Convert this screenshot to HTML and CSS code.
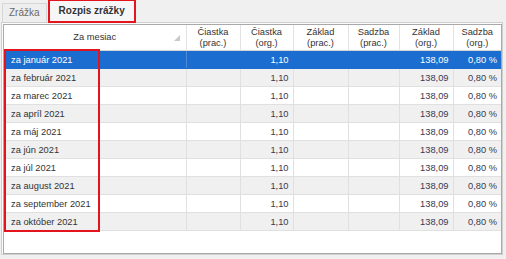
FILE: index.html
```html
<!DOCTYPE html>
<html lang="sk">
  <head>
    <meta charset="UTF-8" />
    <title>Rozpis zrážky</title>
    <link rel="stylesheet" href="styles.css">
  </head>
  <body>
    <div class="tabs">
      <div class="tab">Zrážka</div>
      <div class="tab tab--active">Rozpis zrážky</div>
    </div>
    <div class="panel">
      <div class="grid-wrapper">
        <table class="grid">
          <colgroup>
            <col class="col-month">
            <col class="col-a">
            <col class="col-b">
            <col class="col-c">
            <col class="col-d">
            <col class="col-e">
            <col class="col-f">
          </colgroup>
          <thead>
            <tr>
              <th class="grid__head grid__head--sort">Za mesiac<span class="sort-mark"></span></th>
              <th class="grid__head">Čiastka<br>(prac.)</th>
              <th class="grid__head">Čiastka<br>(org.)</th>
              <th class="grid__head">Základ<br>(prac.)</th>
              <th class="grid__head">Sadzba<br>(prac.)</th>
              <th class="grid__head">Základ<br>(org.)</th>
              <th class="grid__head">Sadzba<br>(org.)</th>
            </tr>
          </thead>
          <tbody>
            <tr class="row row--selected"><td>za január 2021</td><td></td><td class="num">1,10</td><td></td><td></td><td class="num">138,09</td><td class="num">0,80 %</td></tr>
            <tr class="row"><td>za február 2021</td><td></td><td class="num">1,10</td><td></td><td></td><td class="num">138,09</td><td class="num">0,80 %</td></tr>
            <tr class="row"><td>za marec 2021</td><td></td><td class="num">1,10</td><td></td><td></td><td class="num">138,09</td><td class="num">0,80 %</td></tr>
            <tr class="row"><td>za apríl 2021</td><td></td><td class="num">1,10</td><td></td><td></td><td class="num">138,09</td><td class="num">0,80 %</td></tr>
            <tr class="row"><td>za máj 2021</td><td></td><td class="num">1,10</td><td></td><td></td><td class="num">138,09</td><td class="num">0,80 %</td></tr>
            <tr class="row"><td>za jún 2021</td><td></td><td class="num">1,10</td><td></td><td></td><td class="num">138,09</td><td class="num">0,80 %</td></tr>
            <tr class="row"><td>za júl 2021</td><td></td><td class="num">1,10</td><td></td><td></td><td class="num">138,09</td><td class="num">0,80 %</td></tr>
            <tr class="row"><td>za august 2021</td><td></td><td class="num">1,10</td><td></td><td></td><td class="num">138,09</td><td class="num">0,80 %</td></tr>
            <tr class="row"><td>za september 2021</td><td></td><td class="num">1,10</td><td></td><td></td><td class="num">138,09</td><td class="num">0,80 %</td></tr>
            <tr class="row"><td>za október 2021</td><td></td><td class="num">1,10</td><td></td><td></td><td class="num">138,09</td><td class="num">0,80 %</td></tr>
          </tbody>
        </table>
        <div class="highlight-box"></div>
      </div>
    </div>
  </body>
</html>
```

FILE: styles.css
```css
html {
  background-color: #f0f0f0;
}
body {
  margin: 0;
  font-family: "Liberation Sans", Arial, sans-serif;
  font-size: 9.3px;
  color: #333;
}
.tabs {
  display: flex;
  align-items: flex-end;
  height: 22px;
  padding-left: 2px;
}
.tab {
  box-sizing: border-box;
  height: 19px;
  line-height: 18px;
  padding: 0 6px;
  border: 1px solid #d6d6d6;
  border-bottom: none;
  background-color: #eeeeee;
  color: #6a6a6a;
  font-size: 10px;
}
.tab--active {
  height: 22px;
  line-height: 20px;
  margin-left: 2px;
  padding: 0 9px;
  background-color: #f6f6f6;
  color: #333;
  font-weight: bold;
  outline: 2px solid #e3141e;
  outline-offset: -1px;
}
.panel {
  box-sizing: border-box;
  height: 233px;
  margin: 0 3px 0 1px;
  padding: 1px 0 2px 1px;
  border: 1px solid #cfcfcf;
  background-color: #fbfbfb;
}
.grid-wrapper {
  position: relative;
  height: 228px;
  border: 1px solid #a9a9a9;
  background-color: #fff;
  overflow: hidden;
}
.grid {
  width: 497px;
  border-collapse: collapse;
  table-layout: fixed;
}
.col-month { width: 182px; }
.col-a { width: 54px; }
.col-b { width: 53px; }
.col-c { width: 55px; }
.col-d { width: 51px; }
.col-e { width: 54px; }
.col-f { width: 48px; }
.grid__head {
  height: 25px;
  padding: 0;
  font-weight: normal;
  line-height: 11px;
  text-align: center;
  border-right: 1px solid #e3e3e3;
  border-bottom: 1px solid #d4d4d4;
  background-color: #fff;
}
.grid__head:last-child {
  border-right: none;
}
.grid__head--sort {
  position: relative;
}
.sort-mark {
  position: absolute;
  right: 6px;
  top: 10px;
  width: 0;
  height: 0;
  border-left: 6px solid transparent;
  border-bottom: 6px solid #c9c9c9;
}
.row td {
  height: 17px;
  padding: 0 4px 0 7px;
  border-right: 1px solid #e0e0e0;
  border-bottom: 1px solid #e0e0e0;
  white-space: nowrap;
  overflow: hidden;
}
.row td:last-child {
  border-right: none;
}
.row:nth-child(even) td {
  background-color: #f0f0f0;
}
.row td.num {
  padding: 0 4px 0 0;
  text-align: right;
  color: #383850;
}
.row--selected td,
.row--selected td.num {
  background-color: #1b6dcf;
  color: #fff;
  border-right-color: #1b6dcf;
  border-bottom-color: #1b6dcf;
}
.row--selected td:first-child {
  border-right-color: #4d8bd8;
}
.highlight-box {
  position: absolute;
  left: 0;
  top: 24px;
  width: 92px;
  height: 179px;
  border: 2px solid #e3141e;
}
```
